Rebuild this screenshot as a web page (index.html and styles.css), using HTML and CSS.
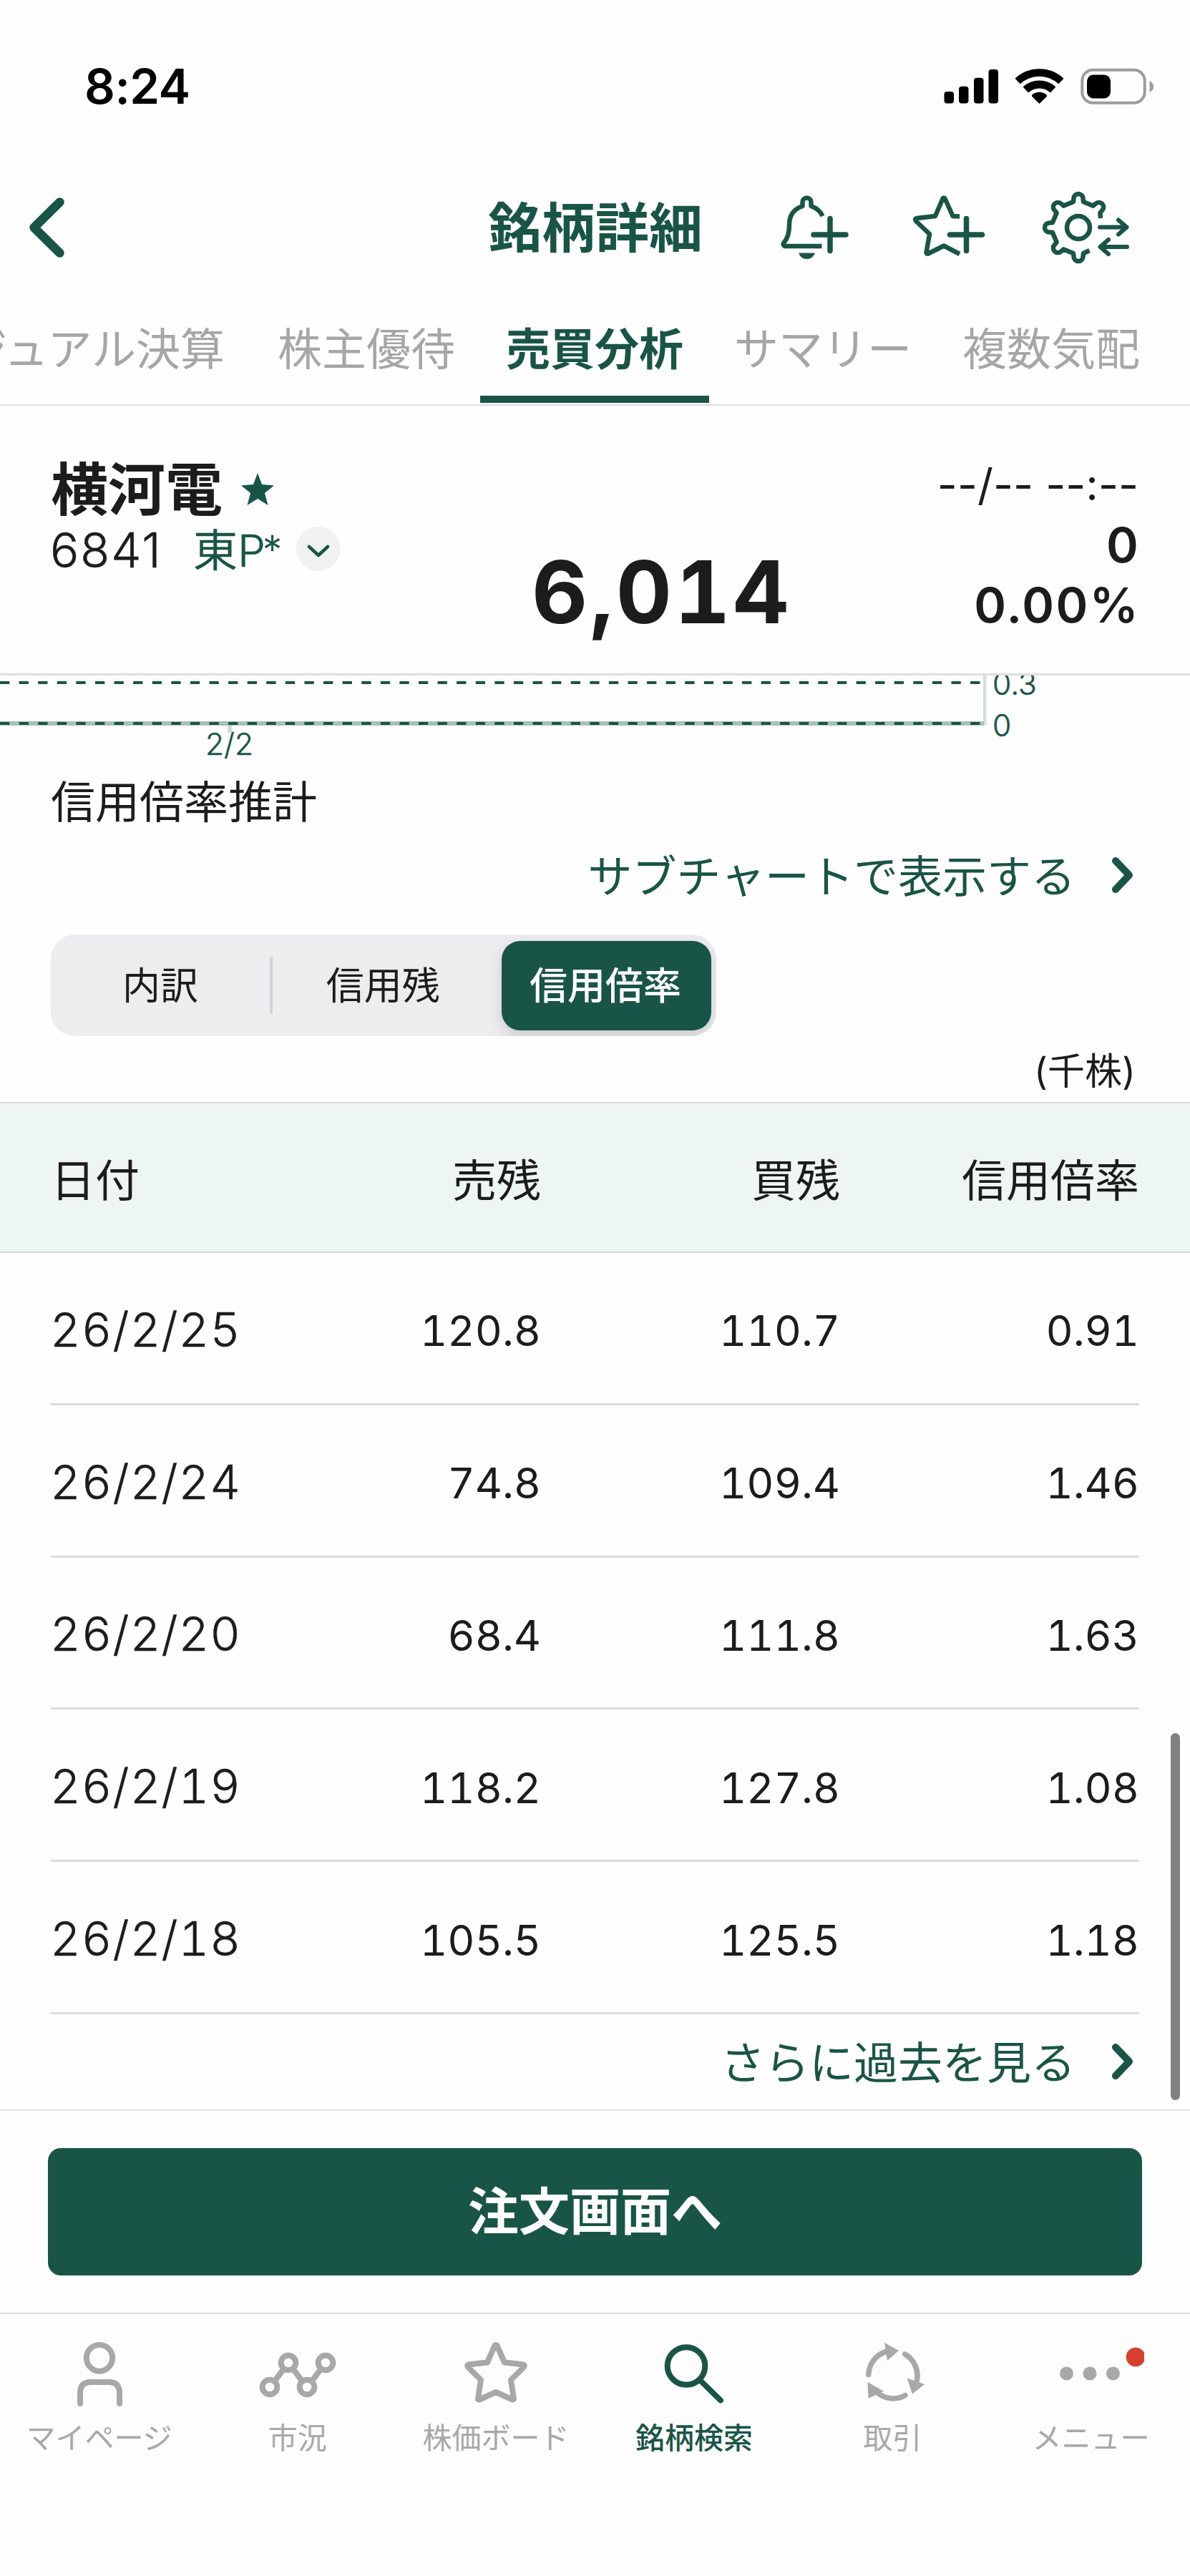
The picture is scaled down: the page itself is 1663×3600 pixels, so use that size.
FILE: index.html
```html
<!DOCTYPE html>
<html lang="ja">
<head>
<meta charset="utf-8">
<title>銘柄詳細</title>
<link rel="stylesheet" href="styles.css">
</head>
<body>
<div class="app">
  <div class="status">
    <span class="clock">8:24</span>
    <svg class="status-icons" width="300" height="60" viewBox="1316 90 300 60">
      <g fill="#000">
        <rect x="1319.5" y="128" width="13.5" height="16.6" rx="4"/>
        <rect x="1340" y="120.7" width="13.5" height="23.9" rx="4"/>
        <rect x="1361" y="108.8" width="13.5" height="35.8" rx="4"/>
        <rect x="1381.5" y="97" width="13.5" height="47.6" rx="4"/>
        <path d="M1452.5 145l-10.4-10.3a3 3 0 0 1 .4-2.4a16 16 0 0 1 20 0a3 3 0 0 1 .4 2.4z"/>
        <rect x="1519" y="104.5" width="33" height="33" rx="9"/>
      </g>
      <g fill="none" stroke="#000">
        <path d="M1422.1 113.5a44.5 44.5 0 0 1 60.8 0" stroke-width="10.5"/>
        <path d="M1433.4 125.5a28 28 0 0 1 38.2 0" stroke-width="11"/>
      </g>
      <rect x="1512.3" y="97.8" width="87.4" height="46" rx="15" fill="none" stroke="#9c9c9c" stroke-width="4"/>
      <path d="M1606.5 113q5.500 2.500 5.500 8t-5.500 8z" fill="#9c9c9c"/>
    </svg>
  </div>

  <header class="nav">
    <svg class="back" width="60" height="96" viewBox="36 269 60 96"><path d="M83.500 281.500L47.500 317l36 35.500" fill="none" stroke="#195546" stroke-width="12.500" stroke-linecap="round" stroke-linejoin="round"/></svg>
    <h1 class="title">銘柄詳細</h1>
    <svg class="actions" width="500" height="110" viewBox="1084 264 500 110" fill="none" stroke="#195546" stroke-width="6.500" stroke-linejoin="round">
      <path d="M1148.500 344H1096.500Q1093.500 341.500 1095.500 339Q1103 331 1103 314C1103 300 1110 292 1121.500 288V282.500A6 6 0 0 1 1133.500 282.500V288Q1145 292 1149.500 302"/>
      <path d="M1116 353.500h23q-3 8.500-11.500 8.500t-11.500-8.500z" fill="#195546" stroke="none"/>
      <path d="M1160 305.500v45M1137 328h45" stroke-width="7.500" stroke-linecap="round"/>
      <path d="M1341 302.500l-9.500-.5L1320.500 277.500q-1.500-2-3 0L1307 302l-26 3q-3.500 1-1 4l19 18-4.500 26q0 2 2.500 1.500L1319 343.500 1341 355"/>
      <path d="M1350.500 305.500v45M1327.500 328h45" stroke-width="7.500" stroke-linecap="round"/>
      <g transform="translate(1507 318)">
        <path d="M31-13L30.400-20.500L33.200-24A6.500 6.500 0 0 0 24-33.200L20.500-30.400L7-36L6.500-40.500A6.500 6.500 0 0 0-6.500-40.500L-7-36L-20.500-30.400L-24-33.200A6.500 6.500 0 0 0-33.200-24L-30.400-20.500L-36-7L-40.500-6.500A6.500 6.500 0 0 0-40.500 6.500L-36 7L-30.400 20.500L-33.200 24A6.500 6.500 0 0 0-24 33.200L-20.500 30.400L-7 36L-6.500 40.500A6.500 6.500 0 0 0 6.500 40.500L7 36L15.500 32"/>
        <circle r="16"/>
        <path d="M30-.5H67M56-10.500L67.500-.5 56 9.500M68 27H31M42 17L30.500 27 42 37" stroke-width="6" stroke-linecap="round"/>
      </g>
    </svg>
  </header>

  <nav class="tabs">
    <span class="tab tab-first">ビジュアル決算</span>
    <span class="tab">株主優待</span>
    <span class="tab tab-active">売買分析</span>
    <span class="tab">サマリー</span>
    <span class="tab">複数気配</span>
  </nav>

  <section class="quote">
    <div class="issue">
      <div class="issue-name">横河電
        <svg class="fav" width="48" height="46" viewBox="0 0 48 46"><path d="M24 0L30 16 47 17.500 34 28 38.500 45 24 36 9.500 45 14 28 1 17.500 18 16z" fill="#195546"/></svg>
      </div>
      <div class="issue-code"><span class="code">6841</span><span class="market">東P<span class="mark">*</span></span>
        <svg class="pick" width="62" height="62" viewBox="0 0 62 62"><circle cx="31" cy="31" r="31" fill="#f2f1f2"/><path d="M18 28l13 12 13-12" fill="none" stroke="#195546" stroke-width="4.500" stroke-linecap="round" stroke-linejoin="round"/></svg>
      </div>
    </div>
    <div class="price">6,014</div>
    <div class="change">
      <span class="time">--/-- --:--</span>
      <span class="diff">0</span>
      <span class="diff">0.00%</span>
    </div>
  </section>

  <svg class="chart" width="1663" height="126" viewBox="0 944 1663 126">
    <rect x="1374" y="944" width="4.500" height="69" fill="#d3dfdb"/>
    <path d="M321 1012v12" stroke="#cfdfda" stroke-width="6"/>
    <path d="M0 1011h1375" stroke="#a9c0b9" stroke-width="6"/>
    <path d="M0 954h1372M0 1011h1372" stroke="#195546" stroke-width="4" stroke-dasharray="13.300 13.290"/>
    <text class="axis" x="1387" y="971">0.3</text>
    <text class="axis" x="1387" y="1029">0</text>
    <text class="axis" x="320.500" y="1055" text-anchor="middle">2/2</text>
  </svg>

  <main class="content">
    <h2 class="subtitle">信用倍率推計</h2>
    <a class="link link-chart"><span class="link-text">サブチャートで表示する</span>
      <svg class="go" width="34" height="54" viewBox="0 0 34 54"><path d="M7 7l19 20L7 47" fill="none" stroke="#195546" stroke-width="10" stroke-linecap="round" stroke-linejoin="round"/></svg></a>
    <div class="segment">
      <span class="seg">内訳</span>
      <span class="seg seg-mid">信用残</span>
      <span class="seg seg-on">信用倍率</span>
    </div>
    <div class="unit">(千株)</div>
  </main>

  <div class="row head"><span>日付</span><span>売残</span><span>買残</span><span>信用倍率</span></div>
  <div class="rows">
    <div class="row"><span class="date">26/2/25</span><span>120.8</span><span>110.7</span><span>0.91</span></div>
    <div class="row"><span class="date">26/2/24</span><span>74.8</span><span>109.4</span><span>1.46</span></div>
    <div class="row"><span class="date">26/2/20</span><span>68.4</span><span>111.8</span><span>1.63</span></div>
    <div class="row"><span class="date">26/2/19</span><span>118.2</span><span>127.8</span><span>1.08</span></div>
    <div class="row"><span class="date">26/2/18</span><span>105.5</span><span>125.5</span><span>1.18</span></div>
    <i class="scrollbar"></i>
  </div>
  <a class="link link-more"><span class="link-text">さらに過去を見る</span>
    <svg class="go" width="34" height="54" viewBox="0 0 34 54"><path d="M7 7l19 20L7 47" fill="none" stroke="#195546" stroke-width="10" stroke-linecap="round" stroke-linejoin="round"/></svg></a>

  <div class="order"><button class="order-btn">注文画面へ</button></div>

  <footer class="tabbar">
    <div class="item"><svg width="110" height="100" viewBox="84 3266 110 100" fill="none" stroke="#a8a8a8" stroke-width="8" stroke-linecap="round"><ellipse cx="139" cy="3295.300" rx="18.200" ry="18.400"/><path d="M112 3359v-15q0-15 15-15h25q15 0 15 15v15"/></svg><span>マイページ</span></div>
    <div class="item"><svg width="110" height="100" viewBox="360.500 3266 110 100" fill="none" stroke="#a8a8a8" stroke-width="8"><circle cx="376.500" cy="3336" r="10.300"/><circle cx="402.500" cy="3302" r="10.300"/><circle cx="428.500" cy="3336" r="10.300"/><circle cx="454.500" cy="3302" r="10.300"/><path d="M383 3328l13-17.500M409 3310.500l13 17.500M435 3328l13-17.500"/></svg><span>市況</span></div>
    <div class="item"><svg width="110" height="100" viewBox="638 3266 110 100" fill="none" stroke="#a8a8a8" stroke-width="8" stroke-linejoin="round"><path d="M694.500 3278l10.500 23.500 26 3q3 1 1 3.500l-18 18 4 26q0 2-2 1.500L693 3343l-23 10.500q-2 .5-2-1.500l4-26-18-18q-2-2.500 1-3.500l26-3 10.500-23.500q1.500-2 3 0z"/></svg><span>株価ボード</span></div>
    <div class="item on"><svg width="110" height="100" viewBox="915 3266 110 100" fill="none" stroke="#195546" stroke-width="8" stroke-linecap="round"><circle cx="959" cy="3306.500" r="26.300"/><path d="M979 3327l28 27.500"/></svg><span>銘柄検索</span></div>
    <div class="item"><svg width="110" height="100" viewBox="1192 3266 110 100" fill="none" stroke="#a8a8a8" stroke-width="7.500" stroke-linecap="round"><path d="M1213.800 3318.500A34.500 34.500 0 0 1 1240 3286M1264.500 3290A34.500 34.500 0 0 1 1281.500 3326M1265 3347.500A34.500 34.500 0 0 1 1223 3341"/><path d="M1236 3274l20 11-16 14zM1267.600 3323.500l24.400 8.500-17 13.700zM1212.500 3329l22.500 12.700-21.500 10z" fill="#a8a8a8" stroke="none"/></svg><span>取引</span></div>
    <div class="item"><svg width="150" height="100" viewBox="1449 3266 150 100"><g fill="#a8a8a8"><circle cx="1490.500" cy="3317" r="9.500"/><circle cx="1523" cy="3317" r="9.500"/><circle cx="1555.500" cy="3317" r="9.500"/></g><circle cx="1587" cy="3294" r="13.300" fill="#d5402e"/></svg><span>メニュー</span></div>
  </footer>
</div>
</body>
</html>
```
FILE: styles.css
```css
* { box-sizing: border-box; }
body { margin: 0; background: #fefefe; color: #1c1c1c; font-family: Inter, "Noto Sans CJK JP", sans-serif; }
svg { display: block; flex: none; }
.app { width: 1663px; height: 3600px; display: flex; flex-direction: column; overflow: hidden; }
.app > * { flex: none; }

.status { height: 240px; padding: 90px 47px 0 118px; display: flex; justify-content: space-between; align-items: flex-start; color: #000; }
.clock { font-size: 67px; font-weight: 600; line-height: 62px; letter-spacing: -.5px; }

.nav { height: 157px; padding: 0 79px 0 36px; display: grid; grid-template-columns: 500px 1fr 500px; align-items: center; color: #195546; }
.back { margin-top: -2px; }
.actions { margin-top: 1px; }
.title { font-size: 75px; font-weight: 700; line-height: 110px; margin: 0; text-align: center; white-space: nowrap; padding-left: 44px; }

.tabs { height: 170px; border-bottom: 2px solid #dedede; display: flex; justify-content: flex-end; gap: 71px; padding-right: 70px; font-size: 62px; line-height: 90px; color: #a6a6a6; white-space: nowrap; overflow: hidden; }
.tab { padding-top: 47px; height: 166px; }
.tab-first { margin-right: 3px; }
.tab-active { color: #195546; font-weight: 700; border-bottom: 10px solid #195546; margin: 0 -36px; padding-left: 36px; padding-right: 36px; }

.quote { height: 377px; border-bottom: 3px solid #e0e0e0; padding: 0 74px 0 71px; display: grid; grid-template-columns: 660px 1fr 400px; }
.issue-name { font-size: 80px; font-weight: 700; line-height: 100px; padding-top: 67px; display: flex; align-items: center; }
.fav { margin-left: 25px; }
.issue-code { display: flex; align-items: center; height: 62px; margin-top: 2px; }
.code { font-size: 67px; font-weight: 350; letter-spacing: 2px; width: 200px; margin-left: -1px; padding-top: 2px; -webkit-text-stroke: .5px; }
.market { font-size: 62px; font-weight: 350; line-height: 80px; margin-top: 6px; color: #195546; width: 144px; white-space: nowrap; -webkit-text-stroke: .5px; }
.mark { font-size: 54px; line-height: 1; position: relative; top: -5px; margin-left: -4px; }
.price { font-size: 121px; font-weight: 700; line-height: 150px; padding-top: 185px; padding-left: 12px; letter-spacing: 3.500px; font-variant-numeric: tabular-nums; white-space: nowrap; }
.change { display: flex; flex-direction: column; align-items: flex-end; white-space: nowrap; }
.time { font-size: 61px; line-height: 84px; margin-top: 68px; margin-right: -2px; }
.diff { font-size: 68px; font-weight: 600; line-height: 84px; letter-spacing: 2.200px; margin-right: -4px; }

.axis { font-size: 42.500px; font-weight: 350; fill: #195546; stroke: #195546; stroke-width: .5px; }

.subtitle { margin: 0; padding-left: 71px; padding-top: 7px; font-size: 62px; font-weight: 400; line-height: 90px; height: 108px; }
.link { display: flex; justify-content: flex-end; align-items: center; gap: 49px; padding-right: 77px; font-size: 62px; line-height: 90px; color: #195546; }
.link-text { padding-top: 5px; }
.link-chart { height: 90px; }
.segment { margin: 38px 0 0 71px; width: 930px; height: 142px; border-radius: 34px; background: #ededf0; padding: 9px 7.5px 8.5px 0; display: grid; grid-template-columns: 306px 323.5px 293px; font-size: 53px; line-height: 127px; text-align: center; font-weight: 400; overflow: hidden; }
.seg { height: 124.500px; }
.seg-mid { position: relative; padding-right: 7px; }
.seg-mid::before { content: ""; position: absolute; left: 0; top: 22px; width: 4px; height: 80px; background: #d3d3d7; }
.seg-on { background: #195546; color: #fff; font-weight: 500; border-radius: 26px; box-shadow: 0 8px 20px rgba(0,0,0,.14); padding-right: 2px; }
.unit { padding-right: 76px; padding-top: 4px; text-align: right; font-size: 52px; line-height: 92px; height: 92px; }

.row { height: 212.800px; padding-top: 8px; display: grid; grid-template-columns: 300px 385px 418px 1fr; align-items: center; text-align: right; font-size: 59px; border-bottom: 3px solid #dcdcdc; }
.row > :first-child { text-align: left; }
.head { height: 211px; padding: 0 71px; background: #edf6f3; border-top: 2px solid #d5dad8; border-bottom: 2px solid #d5dad8; font-size: 62px; }
.rows { margin: 0 71px; position: relative; font-variant-numeric: tabular-nums; }
.row .date { font-size: 66px; font-weight: 350; letter-spacing: 1.100px; margin-left: -1px; padding-bottom: 4px; -webkit-text-stroke: .5px; }
.scrollbar { position: absolute; left: 1565px; top: 671px; width: 13px; height: 513px; border-radius: 7px; background: #808080; }
.link-more { height: 133px; }

.order { height: 284px; border-top: 2px solid #e2e2e2; padding: 52px 67px 0; }
.order-btn { width: 100%; height: 178px; border: 0; border-radius: 18px; background: #195546; color: #fff; font: 700 71px/100px "Noto Sans CJK JP", sans-serif; padding: 0 0 11px; }

.tabbar { height: 368px; border-top: 2px solid #dcdcdc; background: #fdfdfd; padding-top: 32px; display: grid; grid-template-columns: repeat(6, 1fr); font-size: 41px; line-height: 60px; color: #a8a8a8; }
.item { display: flex; flex-direction: column; align-items: center; gap: 11px; }
.on { color: #195546; font-weight: 500; }
```
